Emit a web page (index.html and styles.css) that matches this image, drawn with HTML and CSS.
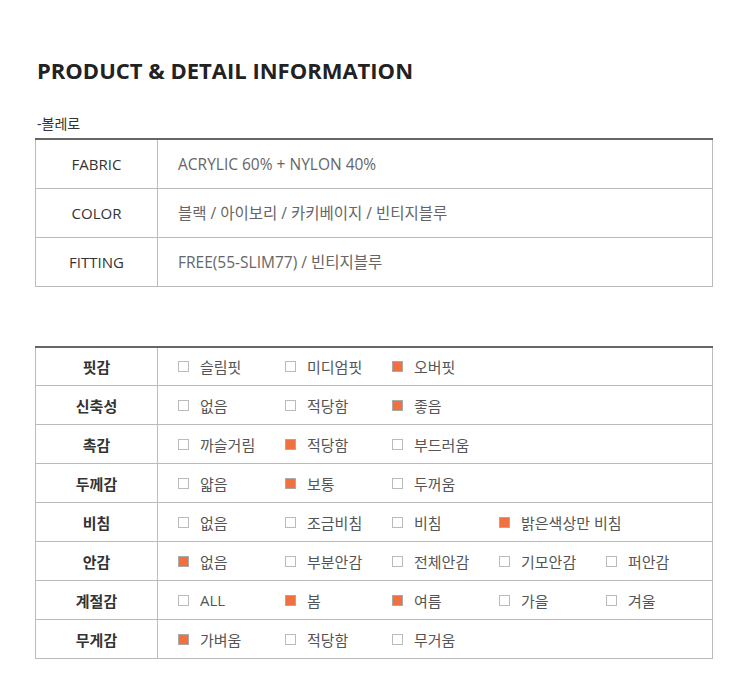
FILE: index.html
```html
<!DOCTYPE html>
<html lang="ko">
<head>
<meta charset="utf-8">
<link rel="stylesheet" href="styles.css">
</head>
<body>
<div class="page">
  <h1 class="title">PRODUCT &amp; DETAIL INFORMATION</h1>
  <div class="subtitle">-볼레로</div>
  <table class="info">
    <tr><th>FABRIC</th><td>ACRYLIC 60% + NYLON 40%</td></tr>
    <tr><th>COLOR</th><td>블랙 / 아이보리 / 카키베이지 / 빈티지블루</td></tr>
    <tr><th>FITTING</th><td>FREE(55-SLIM77) / 빈티지블루</td></tr>
  </table>

  <table class="detail">
    <tr><th>핏감</th><td><div class="opts">
      <span class="opt"><i class="box"></i>슬림핏</span>
      <span class="opt"><i class="box"></i>미디엄핏</span>
      <span class="opt"><i class="box on"></i>오버핏</span>
    </div></td></tr>
    <tr><th>신축성</th><td><div class="opts">
      <span class="opt"><i class="box"></i>없음</span>
      <span class="opt"><i class="box"></i>적당함</span>
      <span class="opt"><i class="box on"></i>좋음</span>
    </div></td></tr>
    <tr><th>촉감</th><td><div class="opts">
      <span class="opt"><i class="box"></i>까슬거림</span>
      <span class="opt"><i class="box on"></i>적당함</span>
      <span class="opt"><i class="box"></i>부드러움</span>
    </div></td></tr>
    <tr><th>두께감</th><td><div class="opts">
      <span class="opt"><i class="box"></i>얇음</span>
      <span class="opt"><i class="box on"></i>보통</span>
      <span class="opt"><i class="box"></i>두꺼움</span>
    </div></td></tr>
    <tr><th>비침</th><td><div class="opts">
      <span class="opt"><i class="box"></i>없음</span>
      <span class="opt"><i class="box"></i>조금비침</span>
      <span class="opt"><i class="box"></i>비침</span>
      <span class="opt"><i class="box on"></i>밝은색상만 비침</span>
    </div></td></tr>
    <tr><th>안감</th><td><div class="opts">
      <span class="opt"><i class="box on"></i>없음</span>
      <span class="opt"><i class="box"></i>부분안감</span>
      <span class="opt"><i class="box"></i>전체안감</span>
      <span class="opt"><i class="box"></i>기모안감</span>
      <span class="opt"><i class="box"></i>퍼안감</span>
    </div></td></tr>
    <tr><th>계절감</th><td><div class="opts">
      <span class="opt"><i class="box"></i>ALL</span>
      <span class="opt"><i class="box on"></i>봄</span>
      <span class="opt"><i class="box on"></i>여름</span>
      <span class="opt"><i class="box"></i>가을</span>
      <span class="opt"><i class="box"></i>겨울</span>
    </div></td></tr>
    <tr><th>무게감</th><td><div class="opts">
      <span class="opt"><i class="box on"></i>가벼움</span>
      <span class="opt"><i class="box"></i>적당함</span>
      <span class="opt"><i class="box"></i>무거움</span>
    </div></td></tr>
  </table>
</div>
</body>
</html>
```

FILE: styles.css
```css
* { box-sizing: border-box; }
html, body { margin: 0; padding: 0; background: #fff; }
body {
  font-family: "Open Sans", "Noto Sans CJK KR", sans-serif;
  color: #333;
}
.page {
  padding: 55px 37px 0 35px;
  width: 750px;
}
.title {
  margin: 0 0 0 2px;
  font-size: 22px;
  line-height: 30px;
  font-weight: 700;
  color: #222;
  letter-spacing: 0;
}
.subtitle {
  margin: 29px 0 0 2px;
  font-size: 14px;
  line-height: 20px;
  color: #333;
}
table {
  width: 678px;
  border-collapse: collapse;
  table-layout: fixed;
}
.info {
  margin-top: 4px;
  border-top: 2px solid #666;
}
.info th, .info td, .detail th, .detail td {
  border: 1px solid #bbb;
  padding: 0;
  font-size: 15px;
}
.info tr:first-child th, .info tr:first-child td,
.detail tr:first-child th, .detail tr:first-child td { border-top: 0; }
.info th {
  width: 122px;
  height: 49px;
  font-weight: 400;
  color: #333;
  text-align: center;
}
.info td {
  padding-left: 20px;
  color: #666;
  font-size: 15.5px;
}
.detail {
  margin-top: 59px;
  border-top: 2px solid #666;
}
.detail th {
  width: 122px;
  height: 39px;
  font-weight: 700;
  color: #333;
  text-align: center;
  font-size: 15px;
}
.detail td {
  padding-left: 20px;
  color: #555;
}
.opts { display: flex; }
.opt {
  width: 107px;
  flex: none;
  display: flex;
  align-items: center;
  white-space: nowrap;
  color: #555;
}
.opt:last-child { width: auto; }
.box {
  width: 11px;
  height: 11px;
  border: 1px solid #bbb;
  background: #fff;
  margin-right: 11px;
  flex: none;
}
.box.on {
  background: #f07040;
  border-color: #aaa;
}
```
